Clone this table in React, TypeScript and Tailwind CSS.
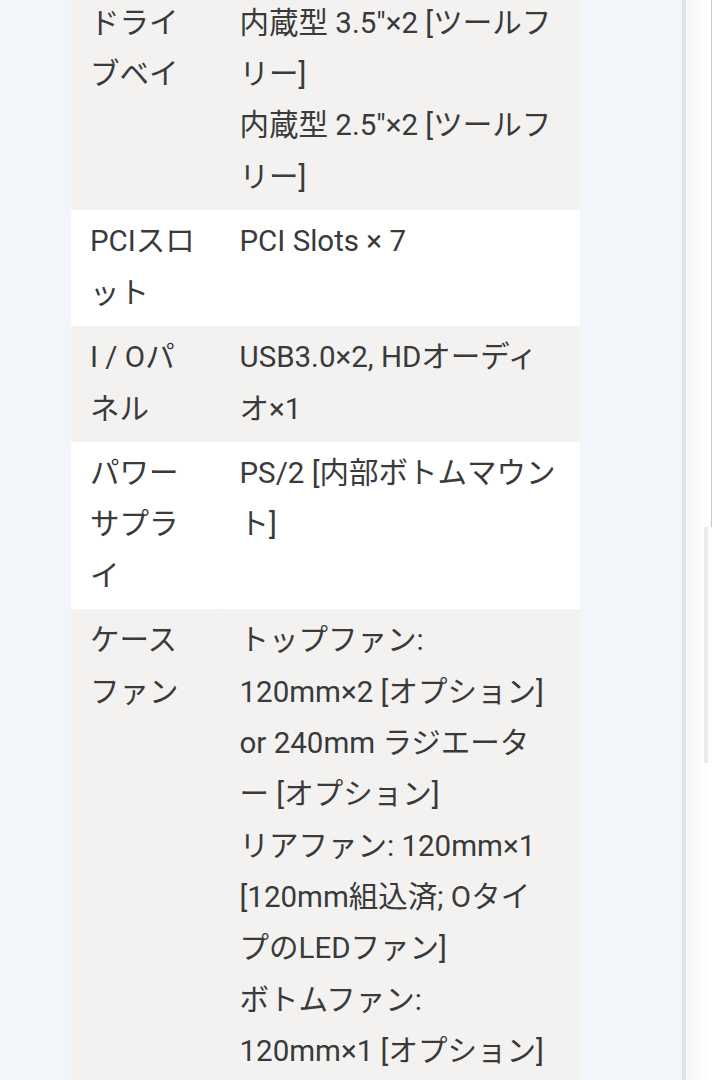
const ROWS: { label: string[]; value: string[]; shade: boolean }[] = [
  {
    label: ["ドライ", "ブベイ"],
    value: ["内蔵型 3.5\"×2 [ツールフ", "リー]", "内蔵型 2.5\"×2 [ツールフ", "リー]"],
    shade: true,
  },
  { label: ["PCIスロ", "ット"], value: ["PCI Slots × 7"], shade: false },
  { label: ["I / Oパ", "ネル"], value: ["USB3.0×2, HDオーディ", "オ×1"], shade: true },
  { label: ["パワー", "サプラ", "イ"], value: ["PS/2 [内部ボトムマウン", "ト]"], shade: false },
  {
    label: ["ケース", "ファン"],
    value: [
      "トップファン:",
      "120mm×2 [オプション]",
      "or 240mm ラジエータ",
      "ー [オプション]",
      "リアファン: 120mm×1",
      "[120mm組込済; Oタイ",
      "プのLEDファン]",
      "ボトムファン:",
      "120mm×1 [オプション]",
    ],
    shade: true,
  },
];

export default function App() {
  return (
    <div
      className="flex h-[1080px] w-full overflow-hidden bg-[#f2f6fb] text-[#3a3a3a]"
      style={{ fontFamily: "Roboto, 'Noto Sans CJK JP', sans-serif" }}
    >
      {/* Page column */}
      <div className="min-w-0 flex-1 pl-[71px]">
        <table className="-mt-[9px] w-[509px] table-fixed border-collapse text-[29.5px] leading-[51.3px]">
          <colgroup>
            <col className="w-[151px]" />
            <col className="w-[358px]" />
          </colgroup>
          <tbody>
            {ROWS.map((row, i) => (
              <tr key={i} className={row.shade ? "bg-[#f3f2f1]" : "bg-white"}>
                <td className="px-[19px] py-[6.7px] align-top">
                  {row.label.map((l) => (
                    <div key={l} className="whitespace-nowrap">
                      {l}
                    </div>
                  ))}
                </td>
                <td
                  className={`border-l py-[6.7px] pl-[17px] pr-[10px] align-top ${
                    row.shade ? "border-[#f5f4f3]" : "border-white"
                  }`}
                >
                  {row.value.map((v, j) => (
                    <div key={j} className="whitespace-nowrap">
                      {v}
                    </div>
                  ))}
                </td>
              </tr>
            ))}
          </tbody>
        </table>
      </div>

      {/* Edge of the sheet */}
      <div className="w-[4px] shrink-0 bg-[#dfe3e8]" />
      <div className="flex w-[26px] shrink-0 flex-col bg-gradient-to-r from-[#f7f7f7] to-white">
        <div className="flex h-[527px] justify-end">
          <div className="w-px bg-[#c9c9c9]" />
        </div>
        <div className="ml-[18px] h-[236px] w-[4px] bg-[#ebebeb]" />
      </div>
    </div>
  );
}
